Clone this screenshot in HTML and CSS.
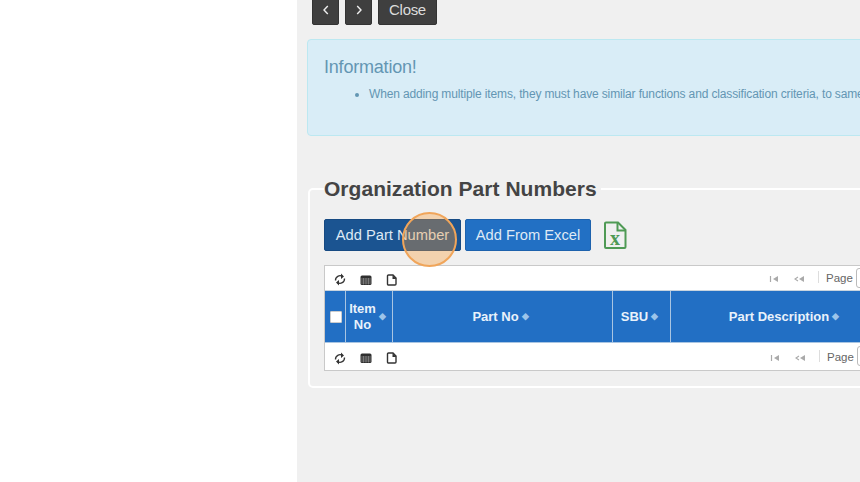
FILE: index.html
```html
<!DOCTYPE html>
<html lang="en">
<head>
<meta charset="utf-8">
<title>Organization Part Numbers</title>
<link rel="stylesheet" href="styles.css">
</head>
<body>
<div class="page">
  <aside class="side"></aside>
  <main class="main">
    <div class="content">
      <div class="toolbar">
        <button class="btn-dark btn-icon"><svg width="8" height="10" viewBox="0 0 8 10"><path d="M5.800 1 2 5l3.800 4" fill="none" stroke="#eee" stroke-width="1.400"/></svg></button>
        <button class="btn-dark btn-icon"><svg width="8" height="10" viewBox="0 0 8 10"><path d="M2.200 1 6 5 2.200 9" fill="none" stroke="#eee" stroke-width="1.400"/></svg></button>
        <button class="btn-dark btn-text">Close</button>
      </div>
      <section class="alert">
        <h4 class="alert-title">Information!</h4>
        <ul class="alert-list">
          <li>When adding multiple items, they must have similar functions and classification criteria, to same</li>
        </ul>
      </section>
      <fieldset class="group">
        <legend class="group-title">Organization Part Numbers</legend>
        <div class="actions">
          <button class="btn btn-active">Add Part Number</button>
          <button class="btn btn-primary">Add From Excel</button>
          <svg class="excel" width="24" height="28" viewBox="0 0 24 28">
            <path d="M3 1.500h12L22.500 9v17a1 1 0 0 1-1 1H3a1 1 0 0 1-1-1V2.500a1 1 0 0 1 1-1z" fill="none" stroke="#4f9a55" stroke-width="2"/>
            <path d="M14.500 1.500V9.500h8" fill="none" stroke="#4f9a55" stroke-width="2"/>
            <text x="12" y="24" text-anchor="middle" class="excel-x">x</text>
          </svg>
        </div>
        <div class="grid">
          <div class="pager">
            <div class="pager-icons">
              <svg width="12" height="13" viewBox="0 0 12 13"><path d="M1.500 7.500a4.500 4.500 0 0 1 7-4M10.500 5.500a4.500 4.500 0 0 1-7 4" fill="none" stroke="#333" stroke-width="1.300"/><path d="M7 .5V6l3-2.500zM5 7v5.500L2 9.500z" fill="#333"/></svg>
              <svg width="12" height="12" viewBox="0 0 12 12"><rect x=".5" y="1.500" width="11" height="9.500" rx="1.500" fill="#2f2f2f"/><path d="M1 5h10M1 7h10M1 9h10M3.500 4v6.500M6 4v6.500M8.500 4v6.500" stroke="#999" stroke-width=".6"/></svg>
              <svg width="12" height="12" viewBox="0 0 12 12"><path d="M2.500 1H7l3 3v6a1 1 0 0 1-1 1H2.500a1 1 0 0 1-1-1V2a1 1 0 0 1 1-1z" fill="none" stroke="#333" stroke-width="1.400"/><path d="M6.500 1v4h4z" fill="#333"/></svg>
            </div>
            <div class="pager-nav">
              <svg class="nav-first" width="10" height="8" viewBox="0 0 10 8"><path d="M1.500 1v6" stroke="#aaa" stroke-width="1.200"/><path d="M9 1v6L4 4z" fill="#aaa"/></svg>
              <svg width="12" height="8" viewBox="0 0 12 8"><path d="M5 2 2 4l3 2" fill="none" stroke="#aaa" stroke-width="1.100"/><path d="M11 1v6L6 4z" fill="#aaa"/></svg>
              <span class="pager-sep"></span>
              <span class="pager-label">Page</span>
              <span class="pager-input"></span>
            </div>
          </div>
          <div class="head">
            <div class="cell cell-check"><span class="check"></span></div>
            <div class="cell cell-item"><span class="item-text">Item<br>No</span><span class="sort">&#9670;</span></div>
            <div class="cell cell-part">Part No<span class="sort">&#9670;</span></div>
            <div class="cell cell-sbu">SBU<span class="sort">&#9670;</span></div>
            <div class="cell cell-desc">Part Description<span class="sort">&#9670;</span></div>
          </div>
          <div class="pager pager-bottom">
            <div class="pager-icons">
              <svg width="12" height="13" viewBox="0 0 12 13"><path d="M1.500 7.500a4.500 4.500 0 0 1 7-4M10.500 5.500a4.500 4.500 0 0 1-7 4" fill="none" stroke="#333" stroke-width="1.300"/><path d="M7 .5V6l3-2.500zM5 7v5.500L2 9.500z" fill="#333"/></svg>
              <svg width="12" height="12" viewBox="0 0 12 12"><rect x=".5" y="1.500" width="11" height="9.500" rx="1.500" fill="#2f2f2f"/><path d="M1 5h10M1 7h10M1 9h10M3.500 4v6.500M6 4v6.500M8.500 4v6.500" stroke="#999" stroke-width=".6"/></svg>
              <svg width="12" height="12" viewBox="0 0 12 12"><path d="M2.500 1H7l3 3v6a1 1 0 0 1-1 1H2.500a1 1 0 0 1-1-1V2a1 1 0 0 1 1-1z" fill="none" stroke="#333" stroke-width="1.400"/><path d="M6.500 1v4h4z" fill="#333"/></svg>
            </div>
            <div class="pager-nav">
              <svg class="nav-first" width="10" height="8" viewBox="0 0 10 8"><path d="M1.500 1v6" stroke="#aaa" stroke-width="1.200"/><path d="M9 1v6L4 4z" fill="#aaa"/></svg>
              <svg width="12" height="8" viewBox="0 0 12 8"><path d="M5 2 2 4l3 2" fill="none" stroke="#aaa" stroke-width="1.100"/><path d="M11 1v6L6 4z" fill="#aaa"/></svg>
              <span class="pager-sep"></span>
              <span class="pager-label">Page</span>
              <span class="pager-input"></span>
            </div>
          </div>
        </div>
      </fieldset>
    </div>
  </main>
  <div class="spot"></div>
</div>
</body>
</html>
```
FILE: styles.css
```css
* { box-sizing: border-box; }
html, body { margin: 0; height: 100%; overflow: hidden; }
body { font-family: "Liberation Sans", Arial, sans-serif; color: #444; background: #fff; }
.page { position: relative; display: flex; width: 860px; height: 482px; overflow: hidden; }
.side { width: 297px; flex: none; background: #fff; }
.main { flex: 1; min-width: 0; background: #f0f0f0; overflow: hidden; }
.content { width: 800px; padding-left: 10px; }
.toolbar { display: flex; align-items: flex-end; gap: 6px; height: 25px; padding-left: 5px; }
.btn-dark { height: 34px; flex: none; border: 1px solid #333; border-radius: 2px; background: #3f3f3f; color: #dcdcdc; font: 15px "Liberation Sans", Arial, sans-serif; padding: 0; display: flex; align-items: flex-end; justify-content: center; }
.btn-icon { width: 27px; padding-bottom: 9px; }
.btn-text { width: 59px; padding-bottom: 6px; letter-spacing: -.3px; }
.alert { margin-top: 14px; height: 97px; padding: 16px 16px 0; background: #d9edf7; border: 1px solid #bce8f1; border-radius: 4px; color: #6396b3; }
.alert-title { margin: 0; font-size: 18px; font-weight: 400; line-height: 22px; letter-spacing: -.2px; }
.alert-list { margin: 7px 0 0; padding-left: 45px; font-size: 12px; line-height: 18px; white-space: nowrap; letter-spacing: -.14px; }
.group { margin: 41px 0 0 1px; padding: 0 14px; height: 211px; border: 2px solid #fff; border-radius: 5px; min-width: 0; }
.group-title { padding: 0 4px 0 0; font-size: 21px; font-weight: 700; line-height: 24px; color: #444; letter-spacing: .03px; }
.actions { display: flex; align-items: center; gap: 4px; margin-top: 18px; height: 32px; }
.btn { height: 32px; border: 1px solid #1d62ad; border-radius: 2px; color: #dfe9f5; font: 14.700px "Liberation Sans", Arial, sans-serif; padding: 0; }
.btn-active { width: 137px; background: #1b5491; border-color: #174a82; }
.btn-primary { width: 126px; background: #2270c4; }
.excel { margin: -1px 0 0 8px; }
.excel-x { font: 700 20px "Liberation Serif", serif; fill: #4f9a55; }
.grid { margin-top: 14px; height: 106px; background: #fff; border: 1px solid #c9c9c9; }
.pager { height: 24px; display: flex; align-items: center; }
.pager-bottom { height: 27px; }
.pager-icons { display: flex; align-items: center; gap: 14px; width: 444px; flex: none; padding-left: 9px; padding-top: 3px; }
.pager-nav { display: flex; align-items: center; flex: none; padding-top: 2px; }
.pager-nav svg { flex: none; margin-right: 14px; }
.pager-sep { width: 1px; height: 12px; background: #ddd; margin: -4px 7px 0 -1px; }
.pager-label { font-size: 11.500px; color: #666; margin-top: -2px; }
.pager-input { width: 30px; height: 20px; margin: -3px 0 0 3px; border: 1px solid #bbb; border-radius: 3px; background: #fff; }
.pager-bottom .nav-first { margin-left: 1px; }
.head { display: flex; height: 53px; background: #226fc4; color: #e9f2fb; font-size: 13px; font-weight: 700; line-height: 16px; border-top: 1px solid #c9d4df; border-bottom: 1px solid #a9c5e2; }
.cell { display: flex; align-items: center; justify-content: center; flex: none; border-right: 1px solid #a9c5e2; text-align: center; }
.cell-check { width: 21px; padding-left: 1px; }
.cell-item { width: 47px; padding-left: 1px; }
.cell-part { width: 220px; }
.cell-sbu { width: 58px; }
.cell-desc { width: 231px; }
.check { width: 12px; height: 12px; background: #fff; border: 1px solid #ccc; border-radius: 1px; }
.sort { font-size: 9px; line-height: 1; margin: 0 4px 0 3px; color: #9cc4ea; }
.spot { position: absolute; left: 402px; top: 212px; width: 55px; height: 55px; border-radius: 50%; border: 2px solid #f0a55a; background: rgba(248, 154, 51, .35); }
```
